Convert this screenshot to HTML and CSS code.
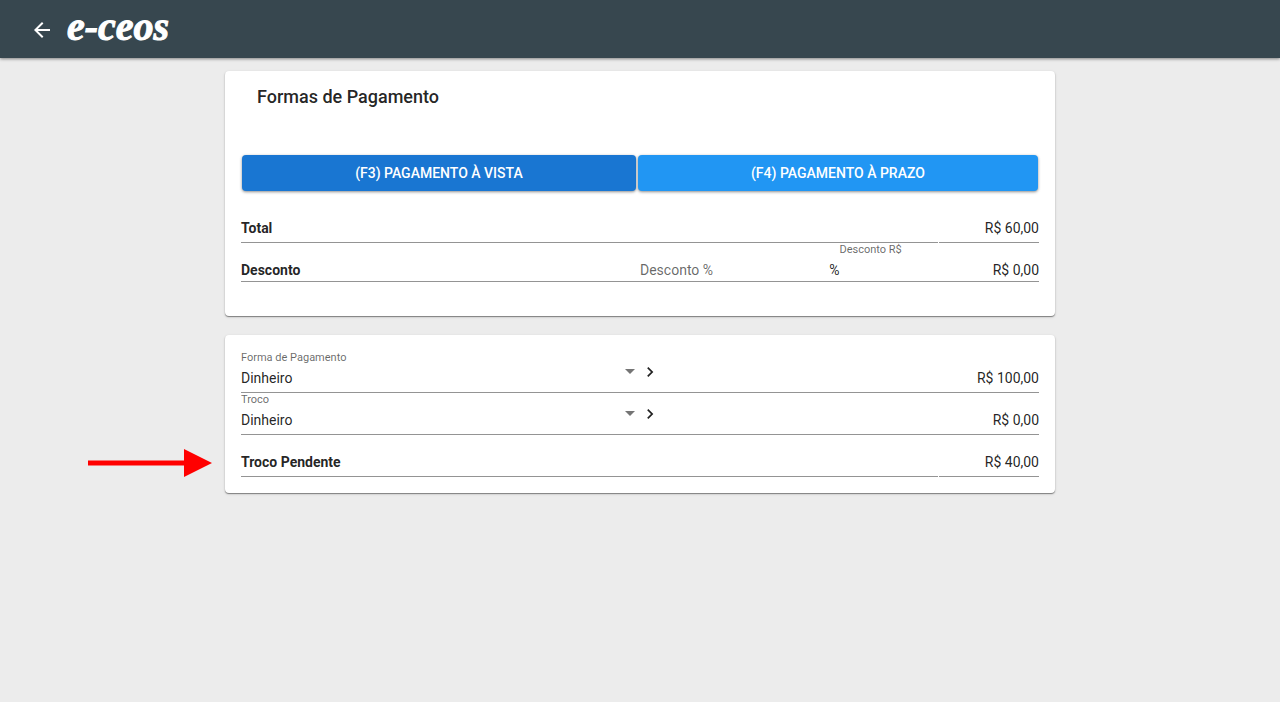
FILE: index.html
```html
<!DOCTYPE html>
<html lang="pt-BR">
<head>
<meta charset="utf-8">
<meta name="viewport" content="width=device-width, initial-scale=1">
<title>e-ceos - Formas de Pagamento</title>
<link rel="stylesheet" href="styles.css">
</head>
<body>
<header class="toolbar">
  <button class="icon-button back" type="button" aria-label="Voltar">
    <svg width="24" height="24" viewBox="0 0 24 24" fill="currentColor"><path d="M20 11H7.83l5.59-5.59L12 4l-8 8 8 8 1.41-1.41L7.83 13H20v-2z"/></svg>
  </button>
  <span class="logo">e-ceos</span>
</header>

<main class="content">
  <section class="card card-methods">
    <h1 class="card-title">Formas de Pagamento</h1>
    <div class="actions">
      <button class="button button-dark" type="button">(F3) PAGAMENTO À VISTA</button>
      <button class="button button-light" type="button">(F4) PAGAMENTO À PRAZO</button>
    </div>
    <div class="split-row">
      <div class="field line"><label class="strong" for="total">Total</label></div>
      <div class="field line amount"><input class="value" id="total" type="text" value="R$ 60,00" readonly></div>
    </div>
    <div class="discount-row">
      <div class="field"><span class="strong">Desconto</span></div>
      <div class="field percent">
        <input class="value-start" type="text" placeholder="Desconto %" aria-label="Desconto %">
        <span class="suffix">%</span>
      </div>
      <div class="field">
        <label class="caption" for="discount">Desconto R$</label>
        <input class="value" id="discount" type="text" value="R$ 0,00">
      </div>
    </div>
  </section>

  <section class="card">
    <div class="payment-row line">
      <div class="field select-field">
        <label class="caption" for="method">Forma de Pagamento</label>
        <select class="select" id="method"><option>Dinheiro</option></select>
        <svg class="caret" width="10" height="5" viewBox="0 0 10 5"><path d="M0 0h10L5 5z" fill="currentColor"/></svg>
      </div>
      <button class="icon-button next" type="button" aria-label="Avançar forma de pagamento">
        <svg width="20" height="20" viewBox="0 0 24 24" fill="currentColor"><path d="M10 6L8.59 7.41 13.17 12l-4.58 4.59L10 18l6-6z"/></svg>
      </button>
      <div class="field"><input class="value" type="text" value="R$ 100,00" aria-label="Valor pago"></div>
    </div>
    <div class="payment-row line">
      <div class="field select-field">
        <label class="caption" for="change">Troco</label>
        <select class="select" id="change"><option>Dinheiro</option></select>
        <svg class="caret" width="10" height="5" viewBox="0 0 10 5"><path d="M0 0h10L5 5z" fill="currentColor"/></svg>
      </div>
      <button class="icon-button next" type="button" aria-label="Avançar troco">
        <svg width="20" height="20" viewBox="0 0 24 24" fill="currentColor"><path d="M10 6L8.59 7.41 13.17 12l-4.58 4.59L10 18l6-6z"/></svg>
      </button>
      <div class="field"><input class="value" type="text" value="R$ 0,00" aria-label="Valor do troco"></div>
    </div>
    <div class="split-row marked">
      <svg class="pointer" width="124" height="28" viewBox="0 0 124 28"><path d="M0 11.500h96V0l28 14-28 14V16.500H0z" fill="#f00"/></svg>
      <div class="field line"><label class="strong" for="pending">Troco Pendente</label></div>
      <div class="field line amount"><input class="value" id="pending" type="text" value="R$ 40,00" readonly></div>
    </div>
  </section>
</main>
</body>
</html>
```
FILE: styles.css
```css
* { box-sizing: border-box; }

body {
  margin: 0;
  min-height: 100vh;
  background: #ececec;
  color: rgba(0, 0, 0, 0.87);
  font: 14px/16px Roboto, sans-serif;
}

button, input, select {
  margin: 0;
  padding: 0;
  border: 0;
  border-radius: 0;
  outline: 0;
  background: transparent;
  color: inherit;
  font: inherit;
}

svg { display: block; }

.toolbar {
  display: flex;
  align-items: center;
  gap: 13px;
  height: 58px;
  padding: 0 30px;
  background: #37474f;
  color: #fff;
  box-shadow: 0 1px 3px rgba(0, 0, 0, 0.45);
}

.icon-button { cursor: pointer; }

.back { padding-top: 2px; }

.logo {
  padding-bottom: 4px;
  font: italic bold 40px/40px "Liberation Serif", serif;
  -webkit-text-stroke: 1px #fff;
}

.content {
  display: flex;
  flex-direction: column;
  gap: 19px;
  max-width: 830px;
  margin: 0 auto;
  padding: 13px 0;
}

.card {
  padding: 16px;
  border-radius: 4px;
  background: #fff;
  box-shadow: 0 1px 1px rgba(0, 0, 0, 0.4), 0 1px 3px rgba(0, 0, 0, 0.15);
}

.card-methods { padding-bottom: 34px; }

.card-title {
  margin: 0 16px 48px;
  font-size: 18px;
  font-weight: 500;
  line-height: 20px;
}

.actions {
  display: flex;
  gap: 2px;
  margin-bottom: 10px;
  padding: 0 1px;
}

.button {
  flex: 1 1 auto;
  height: 36px;
  border-radius: 4px;
  color: #fff;
  font-weight: 500;
  box-shadow: 0 1px 3px rgba(0, 0, 0, 0.45);
  cursor: pointer;
}

.button-dark { background: #1976d2; }
.button-light { background: #2196f3; }

.line { border-bottom: 1px solid #949494; }

.field {
  display: flex;
  flex-direction: column;
  justify-content: flex-end;
  min-width: 0;
  padding-bottom: 6px;
}

.split-row {
  display: grid;
  grid-template-columns: 1fr 100px;
  gap: 1px;
  min-height: 42px;
}

.discount-row {
  display: grid;
  grid-template-columns: 2fr 1fr 1fr;
  min-height: 39px;
  border-bottom: 1px solid #949494;
}

.discount-row .field { padding-bottom: 3px; }

.discount-row .percent {
  flex-direction: row;
  align-items: flex-end;
}

.payment-row {
  display: grid;
  grid-template-columns: 1fr 20px 379px;
  min-height: 42px;
}

.select-field { position: relative; }

.strong { font-weight: 700; }

.caption {
  margin-bottom: 6px;
  color: rgba(0, 0, 0, 0.6);
  font-size: 11px;
  line-height: 12px;
}

.value {
  width: 100%;
  height: 16px;
  text-align: right;
}

.value-start {
  flex: 1;
  min-width: 0;
  height: 16px;
}

.value-start::placeholder { color: rgba(0, 0, 0, 0.6); }

.select {
  width: 100%;
  height: 16px;
  appearance: none;
}

.caret {
  position: absolute;
  top: 18px;
  right: 5px;
  color: #757575;
  pointer-events: none;
}

.next {
  width: 20px;
  height: 41px;
}

.marked { position: relative; }

.pointer {
  position: absolute;
  right: calc(100% + 29px);
  bottom: 0;
}
```
